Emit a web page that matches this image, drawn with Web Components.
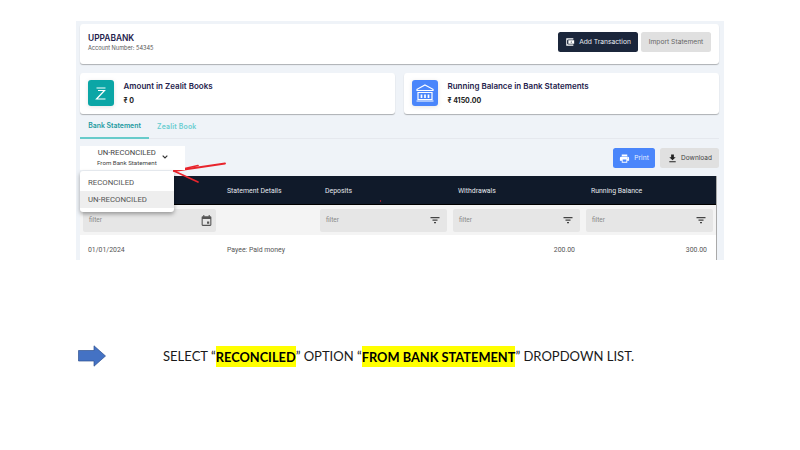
<!DOCTYPE html>
<html>
<head>
<meta charset="utf-8">
<title>Reconcile</title>
<style>
  html, body { margin: 0; height: 100%; background: #fff; }
  body { font-family: Inter, "Liberation Sans", sans-serif; }
</style>
</head>
<body>
<slide-page>
  <app-panel>
    <bank-header slot="header" name="UPPABANK" account="Account Number: 54345">
      <action-button variant="dark" icon="wallet">Add Transaction</action-button>
      <action-button variant="grey">Import Statement</action-button>
    </bank-header>
    <stat-card slot="stats" icon="zealit" title="Amount in Zealit Books" value="₹ 0"></stat-card>
    <stat-card slot="stats" icon="bank" title="Running Balance in Bank Statements" value="₹ 4150.00"></stat-card>
    <tab-bar slot="tabs"></tab-bar>
    <tool-row slot="tools">
      <recon-select slot="select"></recon-select>
      <action-button slot="actions" variant="blue" icon="print">Print</action-button>
      <action-button slot="actions" variant="grey" icon="download">Download</action-button>
    </tool-row>
    <data-table slot="table"></data-table>
  </app-panel>
  <slide-caption></slide-caption>
</slide-page>

<script>
const ICONS = {
  wallet: '<svg width="10" height="10" viewBox="0 0 24 24" fill="#fff"><path d="M3 3h17v3H8a3 3 0 0 0-3 3v6a3 3 0 0 0 3 3h12v3H3z"/><path d="M8 8h14v8H8zm7 2.500a1.500 1.500 0 1 0 0 3 1.500 1.500 0 0 0 0-3z" fill-rule="evenodd"/></svg>',
  print: '<svg width="11" height="11" viewBox="0 0 24 24" fill="#fff"><path d="M19 8H5a3 3 0 0 0-3 3v6h4v4h12v-4h4v-6a3 3 0 0 0-3-3zm-3 11H8v-5h8zm3-7a1 1 0 1 1 0-2 1 1 0 0 1 0 2zM18 3H6v4h12z"/></svg>',
  download: '<svg width="11" height="11" viewBox="0 0 24 24" fill="#222"><path d="M19 9h-4V3H9v6H5l7 7zM5 18v2h14v-2z"/></svg>'
};

class SlidePage extends HTMLElement {
  constructor() {
    super();
    this.attachShadow({ mode: 'open' }).innerHTML = `
    <style>
      :host { display: block; width: 800px; height: 450px; position: relative; overflow: hidden; background: #fff; }
      .arrow { position: absolute; left: 0; top: 0; pointer-events: none; }
    </style>
    <slot></slot>
    <svg class="arrow" width="800" height="450" fill="none" stroke="#e8242c" stroke-linecap="round">
      <path d="M174 171 L225 163.500" stroke-width="1.900"/>
      <path d="M174 171 L198 165.500" stroke-width="1.700"/>
      <path d="M174 171 L198 182" stroke-width="1.700"/>
      <circle cx="380.500" cy="201" r=".7" fill="#e8242c" stroke="none"/>
    </svg>`;
  }
}

class AppPanel extends HTMLElement {
  constructor() {
    super();
    this.attachShadow({ mode: 'open' }).innerHTML = `
    <style>
      :host { display: block; width: 648px; height: 239px; margin: 21px 0 0 76px; box-sizing: border-box; padding: 3px 5px 0 4px; background: #eff3f8; overflow: hidden; }
      .stats { display: grid; grid-template-columns: 315px 315px; gap: 9px; margin-top: 9px; }
    </style>
    <slot name="header"></slot>
    <div class="stats"><slot name="stats"></slot></div>
    <slot name="tabs"></slot>
    <slot name="tools"></slot>
    <slot name="table"></slot>`;
  }
}

class BankHeader extends HTMLElement {
  constructor() {
    super();
    this.attachShadow({ mode: 'open' }).innerHTML = `
    <style>
      :host { display: flex; height: 40px; box-sizing: border-box; padding: 8px 8px 0 8px; justify-content: space-between; align-items: flex-start; background: #fff; border-radius: 3px; box-shadow: 0 1px 1px rgba(0,0,0,.28); }
      h1 { margin: 0; font: 600 8.400px/12px Inter, sans-serif; color: #1f1d4d; }
      p { margin: 0; font: 400 5.600px/8px Inter, sans-serif; color: #555; }
      .btns { display: flex; gap: 3px; }
    </style>
    <div><h1>${this.getAttribute('name')}</h1><p>${this.getAttribute('account')}</p></div>
    <div class="btns"><slot></slot></div>`;
  }
}

class ActionButton extends HTMLElement {
  constructor() {
    super();
    const icon = ICONS[this.getAttribute('icon')] || '';
    this.attachShadow({ mode: 'open' }).innerHTML = `
    <style>
      :host { display: inline-flex; align-items: center; justify-content: center; gap: 4px; height: 20px; box-sizing: border-box; padding: 0 4px; border-radius: 2.500px; font: 400 6.700px/1 Inter, sans-serif; white-space: nowrap; }
      :host([variant=dark]) { width: 80px; background: #1b263b; color: #e8edf4; }
      :host([variant=grey]) { background: #e0e0e0; color: #666; }
      :host([variant=blue]) { width: 42px; background: #4a86fb; color: #e8f0ff; gap: 4px; }
      :host([icon=download]) { width: 59px; color: #444; gap: 3px; font-size: 6.500px; }
      :host(:not([icon])) { width: 70px; }
      svg { display: block; }
    </style>
    ${icon}<slot></slot>`;
  }
}

class StatCard extends HTMLElement {
  constructor() {
    super();
    const zealit = `<svg width="26" height="26" viewBox="0 0 26 26"><rect width="26" height="26" rx="3" fill="#0ba6a6"/><path d="M8.500 8h9M10 10.500h6.500L8.500 19h9" fill="none" stroke="#fff" stroke-width="1.200"/></svg>`;
    const bank = `<svg width="26" height="26" viewBox="0 0 26 26"><rect width="26" height="26" rx="3" fill="#4a86fb"/><path d="M13 5l8 4.300v1.200H5V9.300z" fill="none" stroke="#fff" stroke-width="1.200"/><path d="M6 12.500h14v7H6z M4.500 21h17" fill="none" stroke="#fff" stroke-width="1.200"/><path d="M9.500 14.500v3.500M13 14.500v3.500M16.500 14.500v3.500" stroke="#fff" stroke-width="1.700"/></svg>`;
    this.attachShadow({ mode: 'open' }).innerHTML = `
    <style>
      :host { display: flex; height: 41px; box-sizing: border-box; padding: 7px 0 0 7.500px; gap: 10px; background: #fff; border-radius: 3px; box-shadow: 0 1px 1px rgba(0,0,0,.28); }
      .ic { flex: none; height: 26px; filter: drop-shadow(0 1px 2px rgba(0,0,0,.1)); }
      svg { display: block; }
      b { display: block; font: 600 8px/13px Inter, sans-serif; color: #1f1d4d; }
      span { display: block; font: 700 7px/13px Inter, "DejaVu Sans", sans-serif; color: #222; margin-top: 1px; }
    </style>
    <div class="ic">${this.getAttribute('icon') === 'bank' ? bank : zealit}</div>
    <div><b>${this.getAttribute('title')}</b><span>${this.getAttribute('value')}</span></div>`;
  }
}

class TabBar extends HTMLElement {
  constructor() {
    super();
    this.attachShadow({ mode: 'open' }).innerHTML = `
    <style>
      :host { display: flex; height: 25px; box-sizing: border-box; border-bottom: 1px solid #e5e8ee; font: 600 6.900px/1 Inter, sans-serif; }
      div { display: flex; align-items: center; height: 25px; box-sizing: border-box; padding-top: 1px; }
      .on { width: 69px; justify-content: center; color: #1d9aa0; border-bottom: 2px solid #67cbcb; }
      .off { padding-left: 8px; letter-spacing: .2px; color: #69cdd0; }
    </style>
    <div class="on">Bank Statement</div><div class="off">Zealit Book</div>`;
  }
}

class ToolRow extends HTMLElement {
  constructor() {
    super();
    this.attachShadow({ mode: 'open' }).innerHTML = `
    <style>
      :host { display: flex; height: 37px; box-sizing: border-box; padding-top: 7px; justify-content: space-between; align-items: flex-start; }
      .r { display: flex; gap: 5px; padding-top: 2px; }
    </style>
    <slot name="select"></slot><div class="r"><slot name="actions"></slot></div>`;
  }
}

class ReconSelect extends HTMLElement {
  constructor() {
    super();
    this.attachShadow({ mode: 'open' }).innerHTML = `
    <style>
      :host { display: flex; position: relative; z-index: 2; width: 105px; height: 24px; box-sizing: border-box; background: #fff; align-items: center; padding-left: 17px; gap: 4px; font-family: Roboto, sans-serif; color: #444; }
      .t { text-align: center; }
      .a { font-size: 7.700px; line-height: 11px; white-space: nowrap; }
      .b { font-size: 6.200px; line-height: 11px; white-space: nowrap; }
      .menu { position: absolute; left: 0; top: 25px; width: 94px; height: 41px; padding-top: 3px; box-sizing: border-box; background: #fff; border-radius: 3px; box-shadow: 0 2px 4px rgba(0,0,0,.35); font-size: 7.800px; color: #555; }
      .menu div { height: 17px; line-height: 17px; padding-left: 8px; }
      .menu .sel { background: #eeeeee; }
      svg { display: block; margin-top: -2px; }
    </style>
    <div class="t"><div class="a">UN-RECONCILED</div><div class="b">From Bank Statement</div></div>
    <svg width="8" height="8" viewBox="0 0 24 24" fill="none" stroke="#333" stroke-width="3.500"><path d="M5 8l7 7 7-7"/></svg>
    <div class="menu"><div>RECONCILED</div><div class="sel">UN-RECONCILED</div></div>`;
  }
}

class FilterInput extends HTMLElement {
  constructor() {
    super();
    const cal = this.hasAttribute('date');
    const icon = cal
      ? '<svg width="13" height="13" viewBox="0 0 24 24" fill="#555"><path d="M19 4h-1V2h-2v2H8V2H6v2H5a2 2 0 0 0-2 2v14a2 2 0 0 0 2 2h14a2 2 0 0 0 2-2V6a2 2 0 0 0-2-2zm0 16H5V9h14zm-6-6h4v4h-4z"/></svg>'
      : '<svg width="12" height="12" viewBox="0 0 24 24" fill="#444"><path d="M3 6h18v2.400H3zM7 11h10v2.400H7zM10 16h4v2.400h-4z"/></svg>';
    this.attachShadow({ mode: 'open' }).innerHTML = `
    <style>
      :host { display: flex; height: 23px; box-sizing: border-box; padding: 0 6px; align-items: center; justify-content: space-between; background: #e6e6e6; border-radius: 2px; font: 400 6.500px Roboto, sans-serif; color: #888; }
      :host([date]) { padding-right: 3px; }
      svg { display: block; }
    </style>
    <span>filter</span>${icon}`;
  }
}

class DataTable extends HTMLElement {
  constructor() {
    super();
    this.attachShadow({ mode: 'open' }).innerHTML = `
    <style>
      :host { display: block; width: 637px; box-sizing: border-box; border-right: 1.500px solid #aaa; font: 400 6.900px Roboto, sans-serif; }
      .cols { display: grid; grid-template-columns: 147px 93px 133px 133px 1fr; }
      .head { height: 29px; align-items: center; background: #101a2a; color: #e4e7ec; box-shadow: inset 0 -1px 0 #000; }
      .head .f { padding-left: 5px; }
      .filters { height: 30px; background: #f4f4f4; align-items: center; }
      .filters filter-input { width: 127px; }
      .filters filter-input[date] { margin-left: 3px; width: 133px; }
      .row { height: 30px; align-items: center; background: #fff; color: #555; }
      .num { text-align: right; padding-right: 11px; }
      .row .p { padding-left: 8px; }
    </style>
    <div class="cols head"><div></div><div>Statement Details</div><div class="f">Deposits</div><div class="f">Withdrawals</div><div class="f">Running Balance</div></div>
    <div class="cols filters"><filter-input date></filter-input><div></div><filter-input></filter-input><filter-input></filter-input><filter-input></filter-input></div>
    <div class="cols row"><div class="p">01/01/2024</div><div>Payee: Paid money</div><div></div><div class="num">200.00</div><div class="num" style="padding-right:9px">300.00</div></div>`;
  }
}

class SlideCaption extends HTMLElement {
  constructor() {
    super();
    this.attachShadow({ mode: 'open' }).innerHTML = `
    <style>
      :host { display: flex; align-items: center; height: 24px; margin: 84px 0 0 78px; font: 400 13.050px/24px Lato, "Open Sans", sans-serif; color: #1a1a1a; white-space: nowrap; }
      svg { display: block; flex: none; margin-right: 57px; }
      mark { background: #ffff00; color: #000; font-weight: 700; font-size: 12.800px; padding: 2.500px 0; }
    </style>
    <svg width="28" height="22" viewBox="0 0 28 22"><path d="M.500 5.500h15.500V.800L27.500 11 16 21.200v-5.200H.500z" fill="#4472c4" stroke="#2f528f" stroke-width=".7"/></svg>
    <span>SELECT “<mark>RECONCILED</mark>” OPTION “<mark>FROM BANK STATEMENT</mark>” DROPDOWN LIST.</span>`;
  }
}

customElements.define('slide-page', SlidePage);
customElements.define('app-panel', AppPanel);
customElements.define('bank-header', BankHeader);
customElements.define('action-button', ActionButton);
customElements.define('stat-card', StatCard);
customElements.define('tab-bar', TabBar);
customElements.define('tool-row', ToolRow);
customElements.define('recon-select', ReconSelect);
customElements.define('filter-input', FilterInput);
customElements.define('data-table', DataTable);
customElements.define('slide-caption', SlideCaption);
</script>
</body>
</html>
